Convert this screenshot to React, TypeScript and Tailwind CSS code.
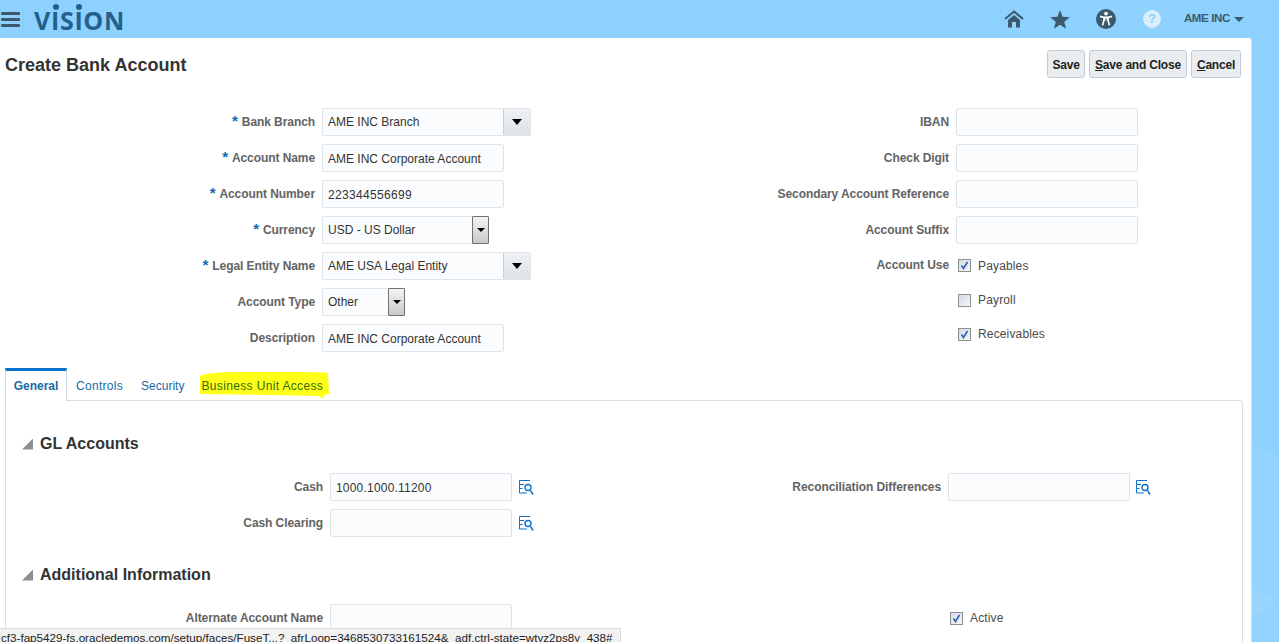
import React from "react";

const Field = ({ value = "", w = "w-[182px]" }: { value?: string; w?: string }) => (
  <div className={`h-[28px] ${w} bg-[#fbfcfe] border border-[#dfe4ea] rounded-[2px] px-[5px] pt-[2px] flex items-center text-[12px] text-[#333]`}>
    {value}
  </div>
);

const Chevron = () => (
  <div className="w-0 h-0 border-l-[5px] border-r-[5px] border-t-[6px] border-l-transparent border-r-transparent border-t-black" />
);

const Combo = ({ value }: { value: string }) => (
  <div className="h-[28px] w-[209px] bg-[#fbfcfe] border border-[#dfe4ea] rounded-[2px] flex items-center text-[12px] text-[#333]">
    <span className="flex-1 px-[5px]">{value}</span>
    <div className="w-[27px] h-full bg-gradient-to-b from-[#eef1f4] to-[#dde2e7] border-l border-[#c8d0d8] flex items-center justify-center">
      <Chevron />
    </div>
  </div>
);

const Select = ({ value, w }: { value: string; w: string }) => (
  <div className={`h-[28px] ${w} bg-[#fbfcfe] border border-[#dfe4ea] rounded-[2px] flex items-center text-[12px] text-[#333]`}>
    <span className="flex-1 px-[5px]">{value}</span>
    <div className="w-[17px] h-[28px] -mr-[1px] bg-gradient-to-b from-[#f4f4f4] to-[#c9c9c9] border border-[#707070] rounded-[1px] flex items-center justify-center">
      <div className="w-0 h-0 border-l-[4px] border-r-[4px] border-t-[4px] border-l-transparent border-r-transparent border-t-black" />
    </div>
  </div>
);

const Row = ({
  label,
  required,
  children,
}: {
  label: string;
  required?: boolean;
  children: React.ReactNode;
}) => (
  <div className="flex items-center h-[28px] mb-[8px]">
    <div className="w-[322px] shrink-0 flex justify-end items-center h-[16px] text-[12px] font-bold tracking-[-0.08px] text-[#636363] pr-[7px] -mt-[1px]">
      {required && <span className="text-[#0f6cb5] text-[15px] leading-[16px] mr-[4px] -mt-[2px]">*</span>}
      <span>{label}</span>
    </div>
    {children}
  </div>
);

const Check = ({ checked, label }: { checked?: boolean; label: string }) => (
  <div className="flex items-center gap-[7px] ml-[2px] text-[12px] tracking-[0.15px] text-[#4a4a4a]">
    <div className="w-[13px] h-[13px] border border-[#8f8f8f] bg-gradient-to-br from-[#d5dbe3] to-[#f4f6f8] flex items-center justify-center">
      {checked && (
        <svg viewBox="0 0 11 11" className="w-[11px] h-[11px]">
          <path d="M2.5 5.5 L4.5 8.5 L8.5 2" fill="none" stroke="#2f5fb3" strokeWidth="1.6" />
        </svg>
      )}
    </div>
    <span>{label}</span>
  </div>
);

const LookupIcon = ({ ml = "ml-[6px]" }: { ml?: string }) => (
  <svg viewBox="0 0 16 17" className={`w-[16px] h-[17px] ${ml} shrink-0`} fill="none" stroke="#0b72cf" strokeWidth="1">
    <path d="M12 1.5H1.5V5.5H5M1.5 5.5V9.5H4.5M1.5 9.5V14H9" />
    <path d="M3 5.5H6" />
    <circle cx="10" cy="8.5" r="3" strokeWidth="1.4" />
    <path d="M12.5 11.5L15 15.5" strokeWidth="1.5" />
  </svg>
);

const Section = ({ title }: { title: string }) => (
  <div className="flex items-center h-[20px]">
    <div className="w-[11px] h-[11px] bg-[#8b8f94] [clip-path:polygon(100%_0,100%_100%,0_100%)]" />
    <h3 className="ml-[7px] text-[16px] font-bold text-[#333]">{title}</h3>
  </div>
);

const FormLabel = ({ text }: { text: string }) => (
  <div className="w-[308px] shrink-0 text-right text-[12px] font-bold tracking-[-0.08px] text-[#636363] pr-[7px] pt-[5px]">{text}</div>
);

export default function App() {
  return (
    <div className="relative h-[642px] overflow-hidden bg-[#8dd1ff] font-['Liberation_Sans',Arial,sans-serif]">
      {/* faint background shapes */}
      <div className="absolute left-[1120px] top-[435px] w-[190px] h-[190px] rounded-full bg-white/[0.05]" />
      <div className="absolute left-[1120px] top-[580px] w-[190px] h-[190px] rounded-full bg-white/[0.05]" />

      {/* top bar */}
      <header className="relative h-[38px] flex items-center">
        <div className="ml-[1px] w-[19px] flex flex-col gap-[3px]">
          <div className="h-[3px] rounded-[1px] bg-[#3c5a6e]" />
          <div className="h-[3px] rounded-[1px] bg-[#3c5a6e]" />
          <div className="h-[3px] rounded-[1px] bg-[#3c5a6e]" />
        </div>
        <div className="relative ml-[14px] mt-[1px] font-['Open_Sans',sans-serif] font-bold text-[25px] leading-[28px] tracking-[0.7px] text-[#245f8e]">
          VISION
          <span className="absolute left-[19px] -top-[2px] w-[6px] h-[6px] rounded-full bg-[#245f8e]" />
          <span className="absolute left-[42px] -top-[2px] w-[6px] h-[6px] rounded-full bg-[#245f8e]" />
        </div>
        <div className="ml-auto flex items-center text-[#3c5a6e]">
          <svg viewBox="0 0 20 18" className="w-[20px] h-[18px]" fill="#3c5a6e">
            <path d="M1 9 L10 1.5 L19 9" fill="none" stroke="#3c5a6e" strokeWidth="2" />
            <path d="M4 10 L10 5 L16 10 V17.5 H12 V12 H8 V17.5 H4 Z" />
          </svg>
          <svg viewBox="0 0 20 19" className="w-[20px] h-[19px] ml-[26px]" fill="#3c5a6e">
            <polygon points="10,0 12.6,6.8 19.8,7.2 14.2,11.8 16.1,18.8 10,14.8 3.9,18.8 5.8,11.8 0.2,7.2 7.4,6.8" />
          </svg>
          <svg viewBox="0 0 20 20" className="w-[20px] h-[20px] ml-[26px]">
            <circle cx="10" cy="10" r="10" fill="#3c5a6e" />
            <circle cx="10" cy="4.6" r="1.9" fill="#fff" />
            <path d="M4 7.4 L8 8.4 V11 L6.6 16.4 M16 7.4 L12 8.4 V11 L13.4 16.4 M8 8.4 H12 M8.6 9 V11.6 M11.4 9 V11.6" fill="none" stroke="#fff" strokeWidth="1.7" />
          </svg>
          <div className="w-[18px] h-[18px] ml-[27px] rounded-full bg-[#d9edfb] text-[#8dd1ff] text-[13px] font-bold flex items-center justify-center">
            ?
          </div>
          <span className="ml-[23px] text-[11.5px] font-bold tracking-[-0.35px]">AME INC</span>
          <div className="ml-[4px] mr-[35px] w-0 h-0 border-l-[5px] border-r-[5px] border-t-[5px] border-l-transparent border-r-transparent border-t-[#3c5a6e]" />
        </div>
      </header>

      {/* main panel */}
      <main className="relative w-[1252px] h-[604px] bg-white rounded-tr-[3px] border-r border-[#c9dff0]">
        <div className="flex items-start pl-[5px] pr-[10px] pt-[12px] h-[70px]">
          <h1 className="text-[18px] font-bold text-[#333] mt-[2px]">Create Bank Account</h1>
          <div className="ml-auto flex gap-[4px] text-[12px] font-bold tracking-[-0.2px] text-[#222]">
            <button className="h-[28px] w-[38px] pt-[1px] border border-[#c2ccd6] rounded-[3px] bg-[#e9edf0]">Save</button>
            <button className="h-[28px] w-[98px] pt-[1px] border border-[#c2ccd6] rounded-[3px] bg-[#e9edf0]">
              <u>S</u>ave and Close
            </button>
            <button className="h-[28px] w-[50px] pt-[1px] border border-[#c2ccd6] rounded-[3px] bg-[#e9edf0]">
              <u>C</u>ancel
            </button>
          </div>
        </div>

        <div className="flex h-[260px]">
          <div className="w-[634px]">
            <Row label="Bank Branch" required><Combo value="AME INC Branch" /></Row>
            <Row label="Account Name" required><Field value="AME INC Corporate Account" /></Row>
            <Row label="Account Number" required><Field value="223344556699" w="w-[182px] tracking-[0.33px]" /></Row>
            <Row label="Currency" required><Select value="USD - US Dollar" w="w-[167px]" /></Row>
            <Row label="Legal Entity Name" required><Combo value="AME USA Legal Entity" /></Row>
            <Row label="Account Type"><Select value="Other" w="w-[83px]" /></Row>
            <Row label="Description"><Field value="AME INC Corporate Account" /></Row>
          </div>
          <div className="flex-1">
            <Row label="IBAN"><Field /></Row>
            <Row label="Check Digit"><Field /></Row>
            <Row label="Secondary Account Reference"><Field /></Row>
            <Row label="Account Suffix"><Field /></Row>
            <div className="-mt-[1px]">
              <Row label="Account Use"><div className="mt-[1px]"><Check checked label="Payables" /></div></Row>
            </div>
            <div className="-mt-[1px]">
              <Row label=""><Check label="Payroll" /></Row>
            </div>
            <div className="-mt-[2px]">
              <Row label=""><Check checked label="Receivables" /></Row>
            </div>
          </div>
        </div>

        {/* tabs */}
        <div className="flex items-end h-[32px] pl-[5px] text-[12px] text-[#1a6aa8]">
          <div className="h-[33px] w-[62px] border-t-[3px] border-t-[#0572ce] border-x border-x-[#cfdbe6] bg-white flex items-center justify-center font-bold relative z-10 -mb-[1px]">
            General
          </div>
          <div className="h-[32px] pt-[4px] flex items-center ml-[9px] tracking-[0.3px]">Controls</div>
          <div className="h-[32px] pt-[4px] flex items-center ml-[18px]">Security</div>
          <div className="h-[32px] pt-[4px] flex items-center ml-[17px] relative text-[#2f6e08] tracking-[0.35px]">
            <svg viewBox="0 0 130 32" className="absolute -left-[1px] top-0 w-[130px] h-[32px]">
              <path d="M0 8 Q6 4 40 4 T100 4 T128 5 L129 26 L124 27 L124 31 L118 28 L70 27 L0 26 Z" fill="#ffff1a" />
            </svg>
            <span className="relative">Business Unit Access</span>
          </div>
        </div>

        {/* tab body */}
        <div className="ml-[5px] mr-[8px] h-[300px] border border-[#d6dfe7] rounded-tr-[3px] pt-[33px] pl-[16px]">
          <Section title="GL Accounts" />
          <div className="flex mt-[19px]">
            <FormLabel text="Cash" />
            <div className="flex items-center">
              <Field value="1000.1000.11200" w="w-[182px] tracking-[0.2px]" />
              <LookupIcon />
            </div>
            <div className="w-[414px] shrink-0 text-right text-[12px] font-bold tracking-[-0.08px] text-[#636363] pr-[7px] pt-[5px] whitespace-nowrap">
              Reconciliation Differences
            </div>
            <div className="flex items-center">
              <Field />
              <LookupIcon ml="ml-[5px]" />
            </div>
          </div>
          <div className="flex mt-[8px]">
            <FormLabel text="Cash Clearing" />
            <div className="flex items-center">
              <Field />
              <LookupIcon />
            </div>
          </div>
          <div className="mt-[28px]">
            <Section title="Additional Information" />
          </div>
          <div className="flex mt-[19px]">
            <FormLabel text="Alternate Account Name" />
            <Field />
            <div className="ml-[436px] mt-[5px]">
              <Check checked label="Active" />
            </div>
          </div>
        </div>
      </main>

      {/* browser status tooltip */}
      <div className="absolute left-0 top-[628px] w-[621px] h-[14px] bg-[#f2f2f2] border-t border-r border-[#dcdcdc] pl-[1px] pt-[2px] text-[11.65px] leading-[14px] text-[#222] whitespace-nowrap overflow-hidden">
        cf3-fap5429-fs.oracledemos.com/setup/faces/FuseT...?_afrLoop=3468530733161524&amp;_adf.ctrl-state=wtyz2ps8y_438#
      </div>
    </div>
  );
}
